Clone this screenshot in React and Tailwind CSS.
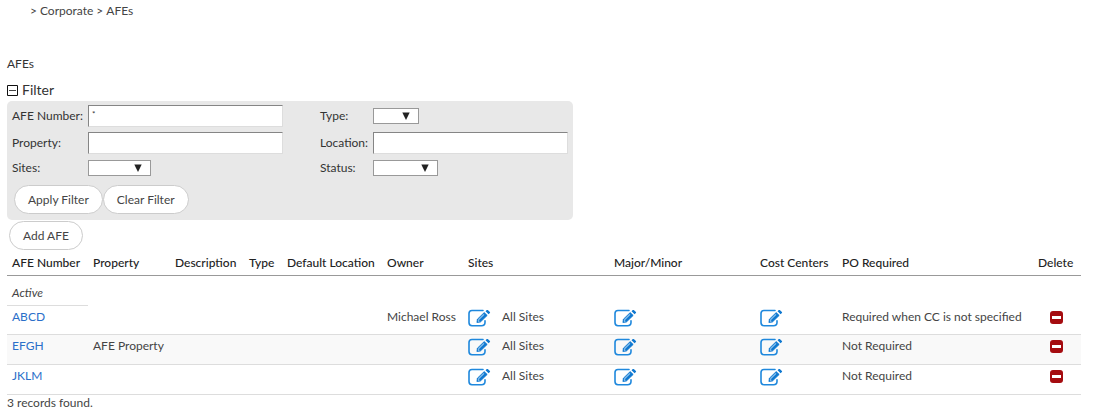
const records = [
  { id: 'ABCD', property: '', owner: 'Michael Ross', po: 'Required when CC is not specified' },
  { id: 'EFGH', property: 'AFE Property', owner: '', po: 'Not Required' },
  { id: 'JKLM', property: '', owner: '', po: 'Not Required' },
];

const columns = [
  ['AFE Number', 'w-[81px]'],
  ['Property', 'w-[82px]'],
  ['Description', 'w-[74px]'],
  ['Type', 'w-[38px]'],
  ['Default Location', 'w-[100px]'],
  ['Owner', 'w-[81px]'],
  ['Sites', 'w-[146px]'],
  ['Major/Minor', 'w-[146px]'],
  ['Cost Centers', 'w-[82px]'],
  ['PO Required', 'w-auto'],
  ['Delete', 'w-[48px]'],
];

function EditIcon() {
  return (
    <svg width="23" height="18" viewBox="0 0 23 18" fill="none" aria-hidden="true">
      <path d="M15 1.5H4Q1 1.5 1 4.5V13.5Q1 16.7 4 16.7H13.5Q17 16.7 17 13.5V11.8" stroke="#1e88dd" strokeWidth="1.6" strokeLinecap="round" />
      <path d="M8.9 13.5L9.4 10.2L16.2 3.6L19.2 6.4L12.4 13Z" fill="#0f78d0" stroke="#0f78d0" strokeWidth=".8" strokeLinejoin="round" />
      <path d="M10.4 10.9L16 5.4" stroke="#8fc3ee" strokeWidth="1.3" />
      <path d="M10 12.7L10.4 11L11.8 12.3Z" fill="#d5e9f9" />
      <path d="M17.5 2.3L18.8 1.1Q19.3 .7 19.8 1.1L21.9 3.1Q22.4 3.6 21.9 4L20.6 5.2Z" fill="#0f78d0" />
    </svg>
  );
}

function EditButton({ label }) {
  return (
    <button type="button" aria-label={label} className="block h-[18px] w-[23px] cursor-pointer">
      <EditIcon />
    </button>
  );
}

function TextField({ id, label, value, gap }) {
  return (
    <>
      <label htmlFor={id} className={gap}>{label}</label>
      <input
        id={id}
        type="text"
        defaultValue={value}
        className="h-[22px] w-full border border-t-[#858585] border-r-[#dddddd] border-b-[#dddddd] border-l-[#858585] bg-white px-[3px] pb-1 text-[8px] text-[#333333]"
      />
    </>
  );
}

function SelectField({ id, label, width, gap }) {
  return (
    <>
      <label htmlFor={id} className={gap}>{label}</label>
      <div className={`relative h-4 ${width}`}>
        <select id={id} className="block h-4 w-full appearance-none border border-[#999999] bg-white">
          <option value=""></option>
        </select>
        <svg className="pointer-events-none absolute top-1 right-[9px]" width="8" height="8" viewBox="0 0 8 8" aria-hidden="true">
          <path d="M.3 .5H7.7L4 8Z" fill="#222222" />
        </svg>
      </div>
    </>
  );
}

function PillButton({ children }) {
  return (
    <button type="button" className="h-[29px] cursor-pointer rounded-full border border-[#cccccc] bg-white px-[13px] text-[#444444]">
      {children}
    </button>
  );
}

export default function App() {
  return (
    <main className="bg-white pr-[13px] pl-[7px] font-[Lato,sans-serif] text-[12px] leading-4 text-[#444444]">
      <nav aria-label="Breadcrumb" className="flex gap-[3px] pt-[3px] pl-[23px]">
        <span>&gt;</span>
        <a href="#corporate">Corporate</a>
        <span>&gt;</span>
        <a href="#afes">AFEs</a>
      </nav>
      <h1 className="mt-[37px] text-[#333333]">AFEs</h1>
      <h2 className="mt-2 text-[14px] leading-5 text-[#333333]">
        <button type="button" aria-expanded="true" className="flex cursor-pointer items-center gap-1">
          <svg width="11" height="11" viewBox="0 0 11 11" aria-hidden="true">
            <path d="M.5 .5H10.5V10.5H.5Z" fill="white" stroke="#111111" />
            <path d="M2 5.5H9" stroke="#444444" />
          </svg>
          Filter
        </button>
      </h2>
      <form className="mt-px max-w-[566px] rounded-[5px] bg-[#e8e8e8] pt-1 pr-[5px] pb-[6px] pl-[5px] text-[#333333]">
        <div className="grid grid-cols-[76px_1fr_90px_1fr] items-center whitespace-nowrap">
          <TextField id="afe-number" label="AFE Number:" value="*" />
          <SelectField id="type" label="Type:" width="w-[46px]" gap="pl-[37px]" />
        </div>
        <div className="mt-[5px] grid grid-cols-[76px_1fr_90px_1fr] items-center whitespace-nowrap">
          <TextField id="property" label="Property:" value="" />
          <TextField id="location" label="Location:" value="" gap="pl-[37px]" />
        </div>
        <div className="mt-[6px] grid grid-cols-[76px_1fr_90px_1fr] items-center whitespace-nowrap">
          <SelectField id="sites" label="Sites:" width="w-[63px]" />
          <SelectField id="status" label="Status:" width="w-[65px]" gap="pl-[37px]" />
        </div>
        <div className="mt-[9px] flex pl-[2px]">
          <PillButton>Apply Filter</PillButton>
          <PillButton>Clear Filter</PillButton>
        </div>
      </form>
      <div className="mt-px flex pl-[2px]">
        <PillButton>Add AFE</PillButton>
      </div>
      <table className="w-full table-fixed border-separate border-spacing-0 text-left">
        <thead>
          <tr className="h-[26px]">
            {columns.map(([name, width]) => (
              <th key={name} scope="col" className={`${width} border-b border-[#999999] pl-[5px] font-medium whitespace-nowrap text-[#222222]`}>
                {name}
              </th>
            ))}
          </tr>
        </thead>
        <tbody>
          <tr className="h-[30px]">
            <td className="border-b border-[#dddddd] pt-1 pl-[5px] italic">Active</td>
            <td colSpan={10}></td>
          </tr>
          {records.map((record, index) => (
            <tr key={record.id} className={`${index === 0 ? 'h-[29px]' : 'h-[30px]'} align-top even:bg-white odd:bg-[#f9f9f9] [&>td]:border-b [&>td]:border-[#dddddd] [&>td]:pt-[3px] [&>td]:pl-[5px] [&>td]:whitespace-nowrap`}>
              <td><a href={`#${record.id}`} className="text-[#2a6fc9]">{record.id}</a></td>
              <td>{record.property}</td>
              <td></td>
              <td></td>
              <td></td>
              <td>{record.owner}</td>
              <td>
                <div className="flex gap-[11px]">
                  <EditButton label={`Edit sites of ${record.id}`} />
                  <span>All Sites</span>
                </div>
              </td>
              <td><EditButton label={`Edit major/minor of ${record.id}`} /></td>
              <td><EditButton label={`Edit cost centers of ${record.id}`} /></td>
              <td>{record.po}</td>
              <td>
                <button type="button" aria-label={`Delete ${record.id}`} className="mt-[2px] ml-3 flex size-[13px] cursor-pointer items-center justify-center rounded-[3px] bg-[#a50c10]">
                  <span className="h-[3px] w-[9px] bg-white"></span>
                </button>
              </td>
            </tr>
          ))}
        </tbody>
      </table>
      <p>3 records found.</p>
    </main>
  );
}
